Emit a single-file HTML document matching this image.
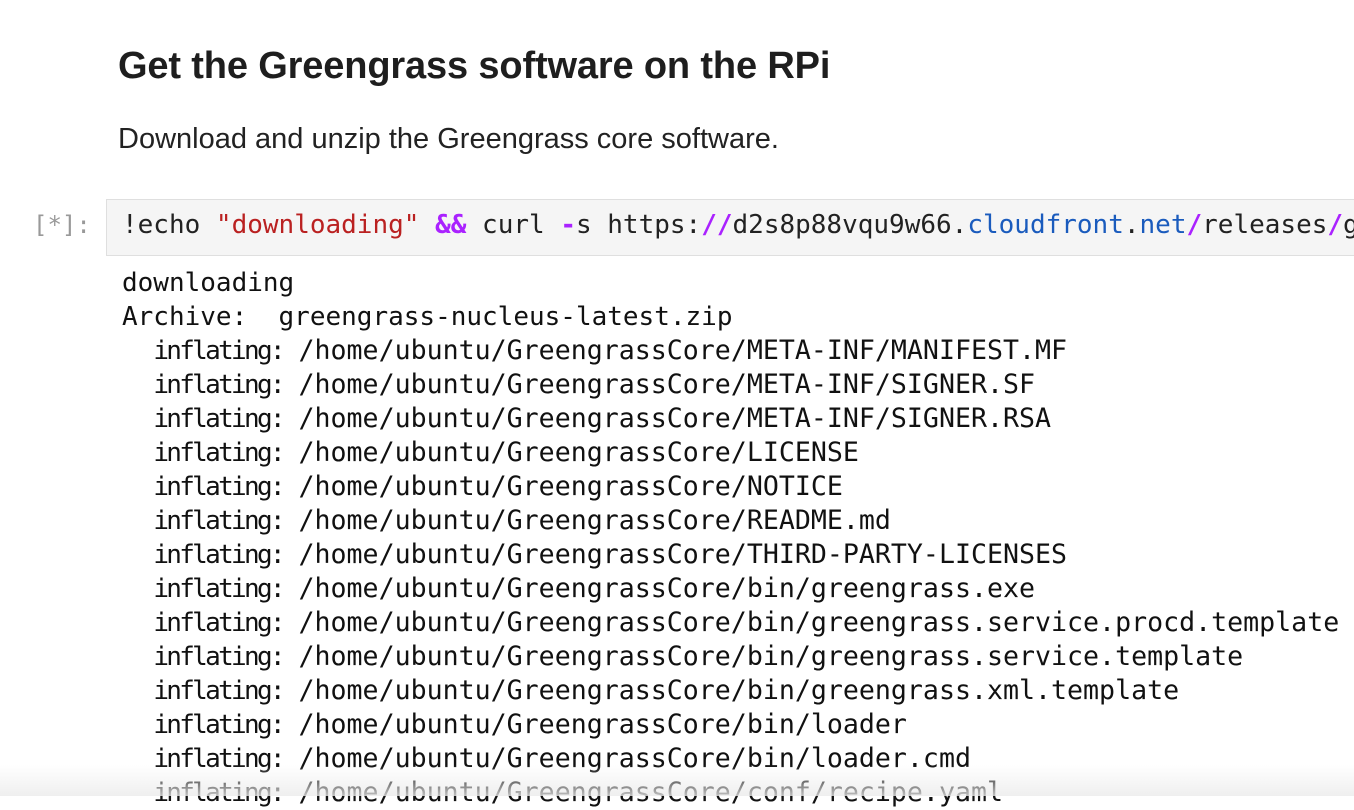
<!DOCTYPE html>
<html><head><style>
body{margin:0;width:1354px;height:796px;overflow:hidden;background:#fff;position:relative;font-family:"Liberation Sans",sans-serif;color:#222}
h1{position:absolute;left:118px;top:45px;margin:0;font-size:38px;font-weight:600;letter-spacing:-0.15px;color:#1e1e1e}
p{position:absolute;left:118px;top:123px;margin:0;font-size:29px;color:#222}
.mono{font-family:"DejaVu Sans Mono","Liberation Mono",monospace;font-size:26px;white-space:pre}
.prompt{position:absolute;left:33px;top:211px;color:#999;font-size:24px}
.cell{position:absolute;left:106px;top:199px;width:1248px;height:57px;background:#f5f5f5;border:1px solid #dfdfdf;border-right:none;box-sizing:border-box;overflow:hidden}
.code{position:absolute;left:15px;top:10px;color:#222}
.s{color:#ba2121}.o{color:#aa22ff;font-weight:bold}.b{color:#1a5bbd}
.out{position:absolute;left:122px;top:266px;line-height:34px;color:#111;width:1232px;overflow:hidden}
.out div{height:34px}
.i{letter-spacing:-2.7px}
.p{font-size:26.6px}
.shade{position:absolute;left:0;top:765px;width:1354px;height:31px;background:linear-gradient(rgba(255,255,255,0),rgba(235,235,235,0.8))}
</style></head><body>
<h1>Get the Greengrass software on the RPi</h1>
<p>Download and unzip the Greengrass core software.</p>
<div class="prompt mono">[*]:</div>
<div class="cell"><div class="code mono">!echo <span class="s">"downloading"</span> <span class="o">&amp;&amp;</span> curl <span class="o">-</span>s https:<span class="o">//</span>d2s8p88vqu9w66.<span class="b">cloudfront</span>.<span class="b">net</span><span class="o">/</span>releases<span class="o">/</span>greengrass</div></div>
<div class="out mono"><div>downloading</div><div>Archive:  greengrass-nucleus-latest.zip</div><div>  <span class="i">inflating:</span> <span class="p">/home/ubuntu/GreengrassCore/META-INF/MANIFEST.MF</span></div><div>  <span class="i">inflating:</span> <span class="p">/home/ubuntu/GreengrassCore/META-INF/SIGNER.SF</span></div><div>  <span class="i">inflating:</span> <span class="p">/home/ubuntu/GreengrassCore/META-INF/SIGNER.RSA</span></div><div>  <span class="i">inflating:</span> <span class="p">/home/ubuntu/GreengrassCore/LICENSE</span></div><div>  <span class="i">inflating:</span> <span class="p">/home/ubuntu/GreengrassCore/NOTICE</span></div><div>  <span class="i">inflating:</span> <span class="p">/home/ubuntu/GreengrassCore/README.md</span></div><div>  <span class="i">inflating:</span> <span class="p">/home/ubuntu/GreengrassCore/THIRD-PARTY-LICENSES</span></div><div>  <span class="i">inflating:</span> <span class="p">/home/ubuntu/GreengrassCore/bin/greengrass.exe</span></div><div>  <span class="i">inflating:</span> <span class="p">/home/ubuntu/GreengrassCore/bin/greengrass.service.procd.template</span></div><div>  <span class="i">inflating:</span> <span class="p">/home/ubuntu/GreengrassCore/bin/greengrass.service.template</span></div><div>  <span class="i">inflating:</span> <span class="p">/home/ubuntu/GreengrassCore/bin/greengrass.xml.template</span></div><div>  <span class="i">inflating:</span> <span class="p">/home/ubuntu/GreengrassCore/bin/loader</span></div><div>  <span class="i">inflating:</span> <span class="p">/home/ubuntu/GreengrassCore/bin/loader.cmd</span></div><div>  <span class="i">inflating:</span> <span class="p">/home/ubuntu/GreengrassCore/conf/recipe.yaml</span></div></div>
<div class="shade"></div>
</body></html>
